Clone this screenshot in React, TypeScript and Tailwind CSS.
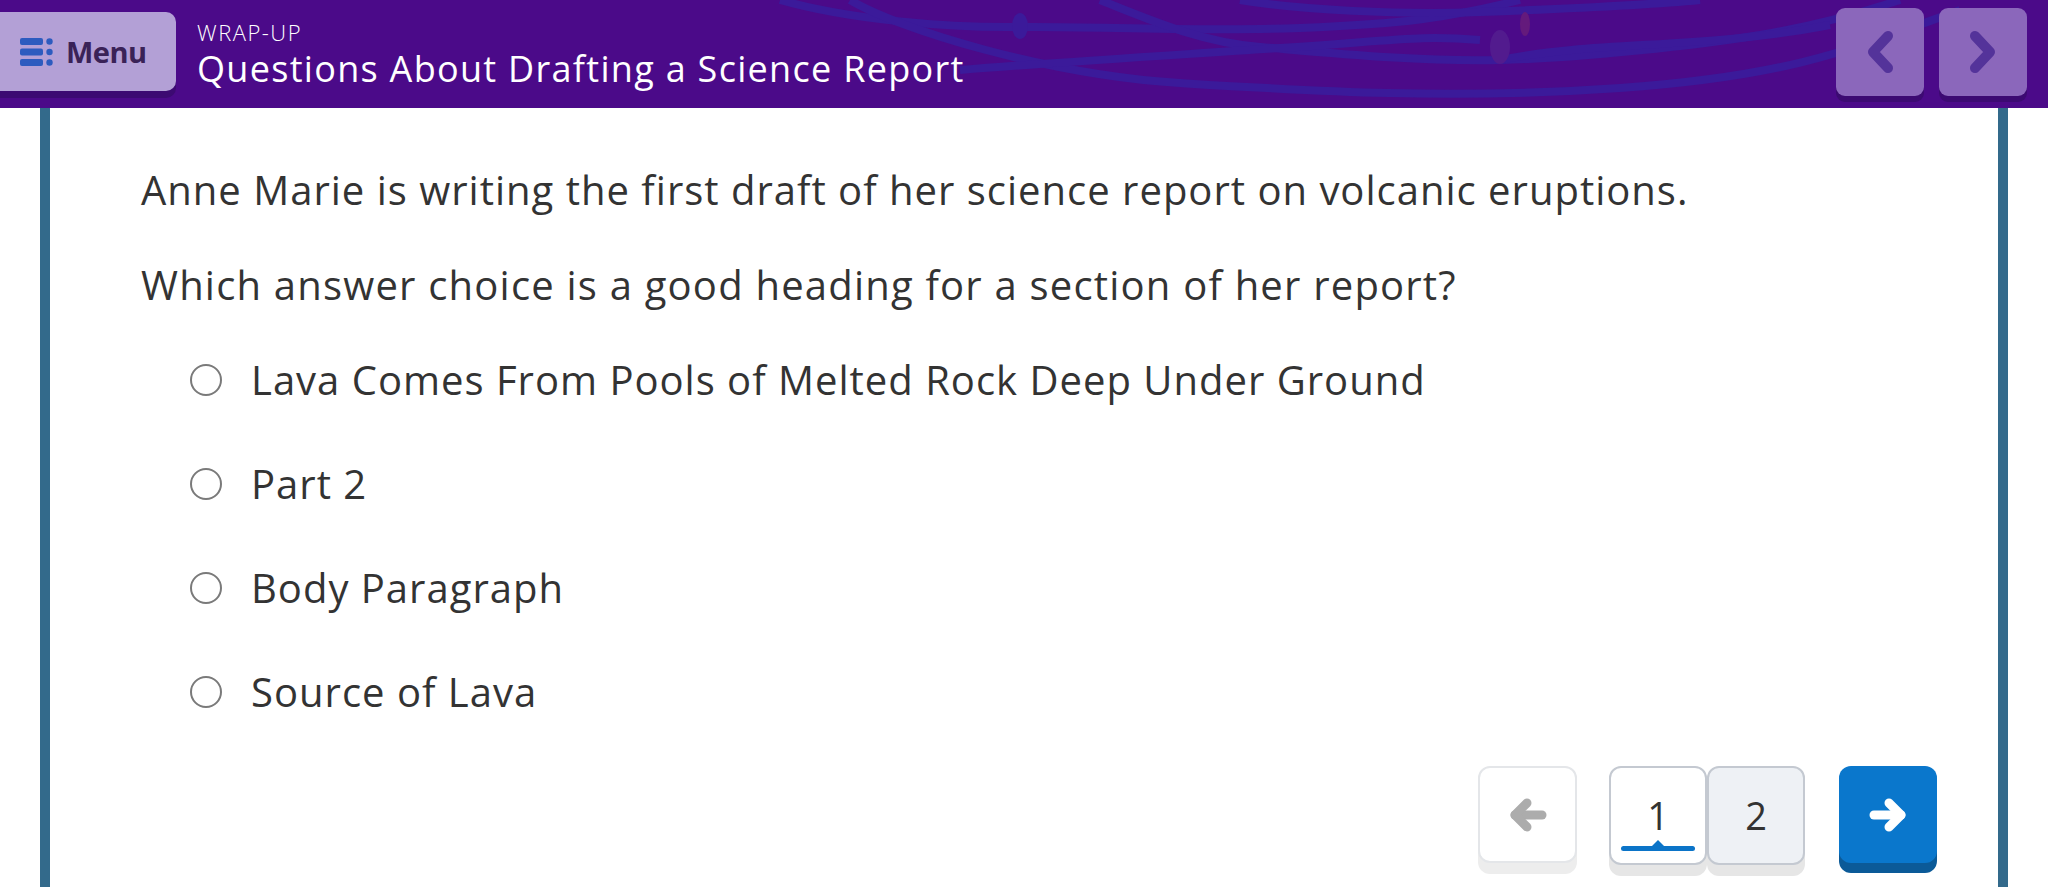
const font = { fontFamily: '"Open Sans", "Noto Sans", sans-serif' };

const choices = [
  "Lava Comes From Pools of Melted Rock Deep Under Ground",
  "Part 2",
  "Body Paragraph",
  "Source of Lava",
];

function MenuIcon() {
  return (
    <svg width="33" height="28" viewBox="0 0 33 28" fill="#2d5bbf">
      <rect x="0" y="0" width="23" height="7" rx="2" />
      <rect x="0" y="10.5" width="23" height="7" rx="2" />
      <rect x="0" y="21" width="23" height="7" rx="2" />
      <circle cx="29.5" cy="3.5" r="3.2" />
      <circle cx="29.5" cy="14" r="3.2" />
      <circle cx="29.5" cy="24.5" r="3.2" />
    </svg>
  );
}

function Chevron({ dir }: { dir: "left" | "right" }) {
  return (
    <svg width="32" height="46" viewBox="0 0 32 46">
      <path
        d={dir === "left" ? "M24 7 L9 23 L24 39" : "M8 7 L23 23 L8 39"}
        fill="none"
        stroke="#54339a"
        strokeWidth="10"
        strokeLinecap="round"
        strokeLinejoin="round"
      />
    </svg>
  );
}

function Arrow({ dir, color }: { dir: "left" | "right"; color: string }) {
  return (
    <svg width="40" height="34" viewBox="0 0 40 34">
      <g
        fill="none"
        stroke={color}
        strokeWidth="9"
        strokeLinecap="round"
        strokeLinejoin="round"
        transform={dir === "left" ? "" : "translate(40 0) scale(-1 1)"}
      >
        <path d="M7 17 H34" />
        <path d="M19 5 L7 17 L19 29" />
      </g>
    </svg>
  );
}

// swirly line art behind the header
function Swirls() {
  return (
    <svg
      className="absolute inset-0 pointer-events-none"
      width="2048"
      height="108"
      viewBox="0 0 2048 108"
    >
      <g fill="none" stroke="#3b1a9a" strokeWidth="8">
        <path d="M780 0 C850 20 950 28 1020 27 S1200 32 1300 28 S1450 18 1520 0" />
        <path d="M850 0 C900 30 1050 75 1180 83 S1450 100 1620 88 S1850 50 1960 10" />
        <path d="M1100 0 C1150 20 1200 42 1260 47 S1420 62 1500 60 S1700 45 1760 35 S1870 10 1900 0" />
        <path d="M1240 0 C1300 10 1400 15 1480 12 S1650 5 1700 0" />
        <path d="M960 70 C1060 62 1160 56 1280 48 S1420 35 1480 40" />
        <path d="M1500 60 C1600 40 1700 50 1830 25" />
      </g>
      <ellipse cx="1020" cy="26" rx="8" ry="13" fill="#3b1a9a" />
      <ellipse cx="1500" cy="47" rx="10" ry="17" fill="#521b8e" />
      <ellipse cx="1525" cy="24" rx="5" ry="12" fill="#641a7c" />
    </svg>
  );
}

function Header() {
  return (
    <header className="relative h-[108px] bg-[#4b0a89] overflow-hidden flex items-start">
      <Swirls />
      <button
        type="button"
        className="relative mt-[12px] w-[176px] h-[79px] rounded-r-[10px] bg-[#b3a0d6] shadow-[0_7px_0_#3c0a72] flex items-center gap-[13px] pl-[20px]"
      >
        <MenuIcon />
        <span
          className="text-[29px] font-bold text-[#3a2257] tracking-[-0.5px]"
          style={font}
        >
          Menu
        </span>
      </button>
      <div className="relative ml-[21px] mt-[18px] text-white" style={font}>
        <p className="text-[22px] font-light leading-[28px] tracking-[1.5px]">WRAP-UP</p>
        <h1 className="text-[36px] font-medium leading-[46px] tracking-[1.3px]">
          Questions About Drafting a Science Report
        </h1>
      </div>
      <div className="relative ml-auto mt-[8px] mr-[21px] flex gap-[15px]">
        <button
          type="button"
          className="w-[88px] h-[88px] rounded-[9px] bg-[#8b67bb] shadow-[0_6px_0_#3c0a72] flex items-center justify-center"
        >
          <Chevron dir="left" />
        </button>
        <button
          type="button"
          className="w-[88px] h-[88px] rounded-[9px] bg-[#8b67bb] shadow-[0_6px_0_#3c0a72] flex items-center justify-center"
        >
          <Chevron dir="right" />
        </button>
      </div>
    </header>
  );
}

function Choice({ label }: { label: string }) {
  return (
    <label className="flex items-center gap-[29px] h-[50px]">
      <span className="w-[32px] h-[32px] rounded-full border-[2.5px] border-[#7a7a7a] bg-white shrink-0" />
      <span className="text-[40px] tracking-[1px] text-[#333]">{label}</span>
    </label>
  );
}

function Pager() {
  return (
    <div className="flex items-start justify-end pr-[61px]">
      <button
        type="button"
        className="w-[99px] h-[97px] rounded-[12px] bg-white border-2 border-[#e4e6e9] shadow-[0_11px_0_#ededed] flex items-center justify-center"
      >
        <Arrow dir="left" color="#acacac" />
      </button>
      <div className="ml-[32px] flex">
        <button
          type="button"
          className="relative w-[98px] h-[99px] rounded-[12px] bg-white border-2 border-[#c4c9d1] shadow-[0_11px_0_#e6e6e6] flex items-center justify-center text-[38px] text-[#333]"
          style={font}
        >
          <span className="-mt-[1px]">1</span>
          <span className="absolute left-[10px] right-[10px] bottom-[12px] h-[5px] rounded-full bg-[#0b74c8]" />
          <span className="absolute left-1/2 -translate-x-1/2 bottom-[15px] w-0 h-0 border-l-[8px] border-r-[8px] border-b-[8px] border-l-transparent border-r-transparent border-b-[#0b74c8]" />
        </button>
        <button
          type="button"
          className="w-[98px] h-[99px] rounded-[12px] bg-[#eef1f5] border-2 border-[#c4c9d1] shadow-[0_11px_0_#e6e6e6] flex items-center justify-center text-[38px] text-[#333]"
          style={font}
        >
          <span className="-mt-[1px]">2</span>
        </button>
      </div>
      <button
        type="button"
        className="ml-[34px] w-[98px] h-[97px] rounded-[12px] bg-[#0a77cc] shadow-[0_10px_0_#0b5a98] flex items-center justify-center"
      >
        <Arrow dir="right" color="#ffffff" />
      </button>
    </div>
  );
}

export default function App() {
  return (
    <div className="w-[2048px] h-[887px] bg-white overflow-hidden flex flex-col">
      <Header />
      <main className="flex-1 mx-[40px] border-x-[10px] border-[#336a8b] pl-[91px] pt-[55px]" style={font}>
        <p className="text-[40px] tracking-[1px] text-[#333] leading-[54px]">
          Anne Marie is writing the first draft of her science report on volcanic eruptions.
        </p>
        <p className="mt-[41px] text-[40px] tracking-[1.2px] text-[#333] leading-[54px]">
          Which answer choice is a good heading for a section of her report?
        </p>
        <div className="mt-[43px] ml-[49px] flex flex-col gap-[54px]">
          {choices.map((c) => (
            <Choice key={c} label={c} />
          ))}
        </div>
        <div className="mt-[49px]">
          <Pager />
        </div>
      </main>
    </div>
  );
}
